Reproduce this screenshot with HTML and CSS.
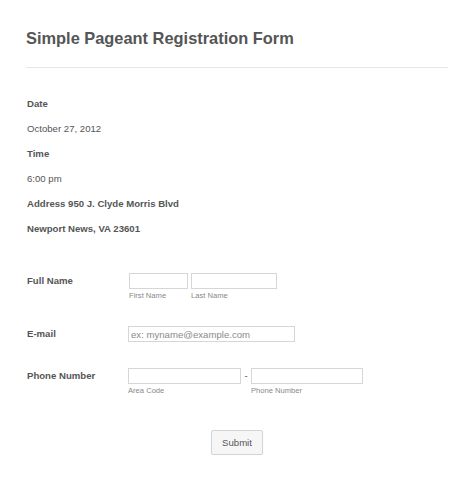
FILE: index.html
```html
<!DOCTYPE html>
<html>
<head>
<meta charset="utf-8">
<link rel="stylesheet" href="styles.css">
</head>
<body>
<div class="page">
  <h1 class="title">Simple Pageant Registration Form</h1>
  <div class="rule"></div>
  <div class="info">
    <div class="line bold">Date</div>
    <div class="line">October 27, 2012</div>
    <div class="line bold">Time</div>
    <div class="line">6:00 pm</div>
    <div class="line bold">Address 950 J. Clyde Morris Blvd</div>
    <div class="line bold">Newport News, VA 23601</div>
  </div>
  <form class="fields">
    <div class="row row-name">
      <label class="label">Full Name</label>
      <div class="controls">
        <div class="sub">
          <input class="input w-first" type="text">
          <span class="sublabel">First Name</span>
        </div>
        <div class="sub">
          <input class="input w-last" type="text">
          <span class="sublabel">Last Name</span>
        </div>
      </div>
    </div>
    <div class="row row-email">
      <label class="label">E-mail</label>
      <div class="controls">
        <input class="input w-email" type="text" placeholder="ex: myname@example.com">
      </div>
    </div>
    <div class="row row-phone">
      <label class="label">Phone Number</label>
      <div class="controls">
        <div class="sub">
          <input class="input w-phone" type="text">
          <span class="sublabel">Area Code</span>
        </div>
        <span class="dash">-</span>
        <div class="sub">
          <input class="input w-phone2" type="text">
          <span class="sublabel">Phone Number</span>
        </div>
      </div>
    </div>
    <div class="actions">
      <button class="submit" type="button">Submit</button>
    </div>
  </form>
</div>
</body>
</html>
```
FILE: styles.css
```css
html, body {
  margin: 0;
  padding: 0;
  background: #fff;
}
body {
  font-family: "Liberation Sans", Arial, sans-serif;
  color: #555;
  font-size: 9.6px;
}
.page {
  width: 422px;
  padding: 0 0 0 26px;
}
.title {
  margin: 0;
  padding-top: 27px;
  font-size: 16.4px;
  line-height: 22px;
  font-weight: bold;
  color: #555;
}
.rule {
  margin-top: 18px;
  height: 1px;
  background: #e6e6e6;
}
.info {
  margin-top: 23px;
  padding-left: 1px;
}
.line {
  line-height: 25px;
  height: 25px;
}
.bold {
  font-weight: bold;
}
.fields {
  margin: 32px 0 0 0;
}
.row {
  display: flex;
  align-items: flex-start;
}
.row-email {
  margin-top: 24px;
}
.row-phone {
  margin-top: 26px;
}
.label {
  width: 101px;
  padding-left: 1px;
  line-height: 16px;
  font-weight: bold;
  flex: none;
}
.controls {
  display: flex;
  align-items: flex-start;
  gap: 3px;
}
.sub {
  display: flex;
  flex-direction: column;
}
.input {
  box-sizing: border-box;
  height: 16px;
  margin: 0;
  padding: 0 2px;
  border: 1px solid #d6d6d6;
  background: #fff;
  font-family: "Liberation Sans", Arial, sans-serif;
  font-size: 9.6px;
  color: #555;
  outline: none;
}
.input::placeholder {
  color: #8a8a8a;
}
.w-first { width: 59px; margin-left: 1px; }
.w-last { width: 86px; }
.w-email { width: 167px; }
.w-phone { width: 113px; }
.w-phone2 { width: 112px; }
.sublabel {
  margin-top: 1px;
  line-height: 12px;
  font-size: 7.6px;
  color: #888;
}
.row-name .sub:first-child .sublabel {
  margin-left: 1px;
}
.dash {
  line-height: 16px;
  width: 4px;
  text-align: center;
}
.actions {
  margin-top: 33px;
  display: flex;
  justify-content: center;
  margin-left: -26px;
  width: 474px;
}
.submit {
  width: 52px;
  height: 25px;
  padding: 0;
  border: 1px solid #d4d4d4;
  border-radius: 2px;
  background: #f6f6f6;
  box-shadow: 0 1px 1px rgba(0,0,0,0.06);
  font-family: "Liberation Sans", Arial, sans-serif;
  font-size: 9.6px;
  color: #555;
}
```
